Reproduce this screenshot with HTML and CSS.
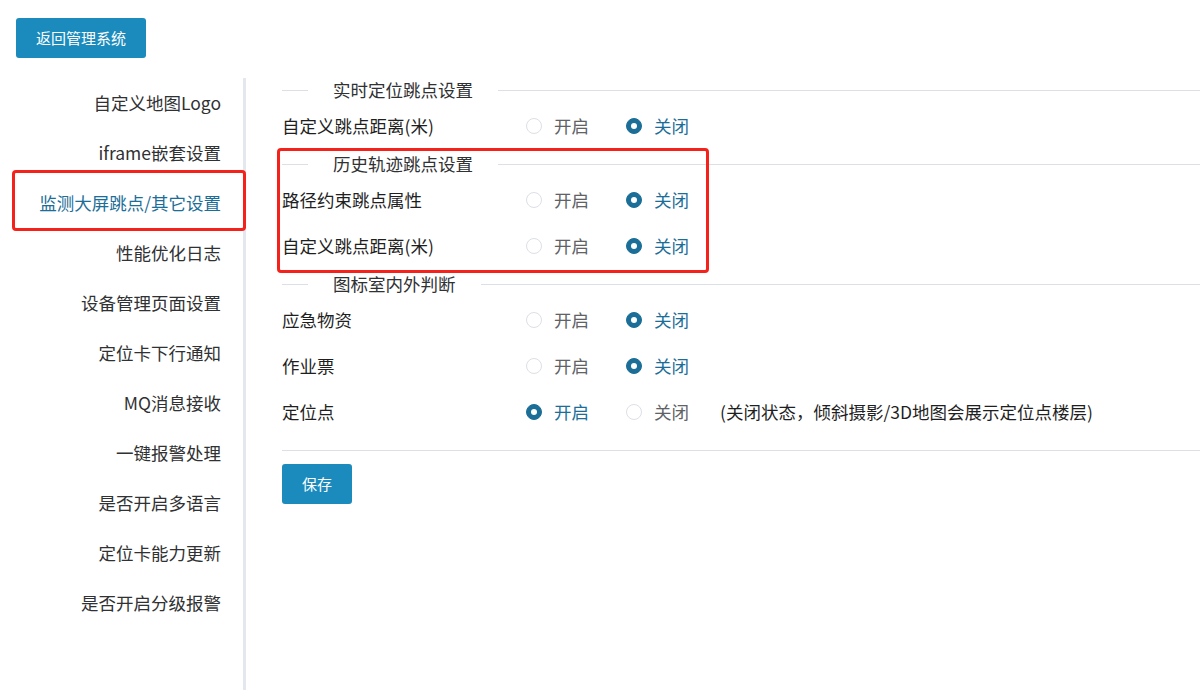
FILE: index.html
```html
<!DOCTYPE html>
<html lang="zh-CN">
<head>
    <meta charset="UTF-8">
    <meta name="viewport" content="width=device-width, initial-scale=1.0">
    <title>系统设置</title>
    <link rel="stylesheet" href="styles.css">
</head>
<body>
    <div class="page">
        <div class="top">
            <button class="btn">返回管理系统</button>
        </div>

        <div class="layout">
            <!-- 左侧设置菜单 -->
            <ul class="tabs">
                <li class="tab">自定义地图Logo</li>
                <li class="tab">iframe嵌套设置</li>
                <li class="tab active">监测大屏跳点/其它设置</li>
                <li class="tab">性能优化日志</li>
                <li class="tab">设备管理页面设置</li>
                <li class="tab">定位卡下行通知</li>
                <li class="tab">MQ消息接收</li>
                <li class="tab">一键报警处理</li>
                <li class="tab">是否开启多语言</li>
                <li class="tab">定位卡能力更新</li>
                <li class="tab">是否开启分级报警</li>
            </ul>

            <!-- 右侧表单 -->
            <div class="content">
                <section class="group">
                    <div class="divider"><span>实时定位跳点设置</span></div>
                    <div class="row">
                        <label class="label">自定义跳点距离(米)</label>
                        <span class="radio"><i></i>开启</span>
                        <span class="radio checked"><i></i>关闭</span>
                    </div>
                </section>

                <section class="group marked">
                    <div class="divider"><span>历史轨迹跳点设置</span></div>
                    <div class="row">
                        <label class="label">路径约束跳点属性</label>
                        <span class="radio"><i></i>开启</span>
                        <span class="radio checked"><i></i>关闭</span>
                    </div>
                    <div class="row">
                        <label class="label">自定义跳点距离(米)</label>
                        <span class="radio"><i></i>开启</span>
                        <span class="radio checked"><i></i>关闭</span>
                    </div>
                </section>

                <section class="group">
                    <div class="divider"><span>图标室内外判断</span></div>
                    <div class="row">
                        <label class="label">应急物资</label>
                        <span class="radio"><i></i>开启</span>
                        <span class="radio checked"><i></i>关闭</span>
                    </div>
                    <div class="row">
                        <label class="label">作业票</label>
                        <span class="radio"><i></i>开启</span>
                        <span class="radio checked"><i></i>关闭</span>
                    </div>
                    <div class="row">
                        <label class="label">定位点</label>
                        <span class="radio checked"><i></i>开启</span>
                        <span class="radio"><i></i>关闭</span>
                        <span class="tip">(关闭状态，倾斜摄影/3D地图会展示定位点楼层)</span>
                    </div>
                </section>

                <div class="footer">
                    <button class="btn btn-save">保存</button>
                </div>
            </div>
        </div>
    </div>
</body>
</html>
```

FILE: styles.css
```css
* {
    box-sizing: border-box;
}
body {
    margin: 0;
    font-family: "Noto Sans CJK SC", "Liberation Sans", sans-serif;
    color: #303133;
    background: #fff;
}
ul {
    margin: 0;
    padding: 0;
    list-style: none;
}

.page {
    height: 100vh;
    padding: 18px 0 0 16px;
    display: flex;
    flex-direction: column;
    overflow: hidden;
}

/* 按钮 */
.btn {
    height: 40px;
    padding: 0 20px;
    border: none;
    border-radius: 3px;
    background-color: #1b8bbd;
    color: #fff;
    font-family: inherit;
    font-size: 15px;
    line-height: 40px;
    cursor: pointer;
}

.layout {
    flex: 1;
    display: flex;
    margin-top: 20px;
}

/* 左侧菜单 */
.tabs {
    width: 230px;
    flex: none;
    border-right: 3px solid #e4e7ed;
}
.tab {
    position: relative;
    height: 50px;
    line-height: 49px;
    margin-right: -3px;
    padding-right: 22px;
    border-right: 3px solid transparent;
    text-align: right;
    font-size: 17.5px;
    white-space: nowrap;
}
.tab.active {
    color: #1b6e98;
    border-right-color: #1b6e98;
}
.tab.active::after {
    content: '';
    position: absolute;
    left: -4px;
    right: -3px;
    top: -8px;
    bottom: -3px;
    border: 3px solid #f5221b;
    border-radius: 4px;
}

/* 右侧表单 */
.content {
    flex: 1;
    margin-left: 36px;
}
.group {
    position: relative;
    margin-bottom: 8px;
}
.group.marked::after {
    content: '';
    position: absolute;
    left: -5px;
    top: -4px;
    width: 426px;
    height: calc(100% + 7px);
    border: 3px solid #f5221b;
    border-radius: 4px;
}

.divider {
    height: 24px;
    display: flex;
    align-items: center;
    margin-bottom: 6px;
    font-size: 17.5px;
    color: #303133;
}
.divider::before,
.divider::after {
    content: '';
    height: 1px;
    background-color: #dcdfe6;
}
.divider::before {
    width: 26px;
}
.divider::after {
    flex: 1;
}
.divider span {
    padding: 0 25px;
    line-height: 22px;
}

.row {
    height: 36px;
    display: flex;
    align-items: center;
    font-size: 17.5px;
    line-height: 34px;
}
.row + .row {
    margin-top: 10px;
}
.label {
    width: 244px;
    flex: none;
    color: #1f1f1f;
}

.radio {
    display: inline-flex;
    align-items: center;
    margin-right: 37px;
    color: #606266;
}
.radio i {
    width: 16px;
    height: 16px;
    margin-right: 12px;
    border: 1px solid #dcdfe6;
    border-radius: 50%;
    background: #fff;
    position: relative;
}
.radio.checked {
    color: #1b6e98;
}
.radio.checked i {
    border-color: #1b6e98;
    background-color: #1b6e98;
}
.radio.checked i::after {
    content: '';
    position: absolute;
    left: 50%;
    top: 50%;
    width: 6px;
    height: 6px;
    margin: -3px 0 0 -3px;
    border-radius: 50%;
    background: #fff;
}
.tip {
    margin-left: -6px;
    color: #1f1f1f;
}

.footer {
    margin-top: 20px;
    padding-top: 13px;
    border-top: 1px solid #dcdfe6;
}
.btn-save {
    width: 70px;
    padding: 0;
}
```
